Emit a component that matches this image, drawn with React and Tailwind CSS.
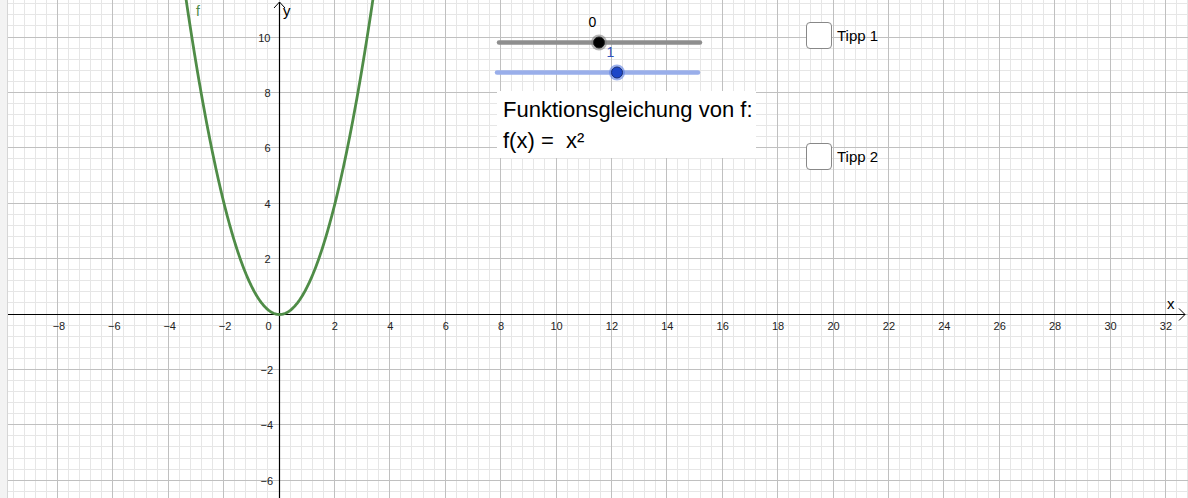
// App.jsx – GeoGebra-style graphics view with f(x) = x²

const W = 1188;
const H = 498;
const OX = 279;   // origin, px
const OY = 314;
const S = 27.7;   // px per unit
const MINOR = S * 0.4;
const LEFT = 8;   // grid starts after the side strip

const px = (v) => Math.floor(v) + 0.5;

const gridLines = () => {
  const minor = [];
  const major = [];
  const kx0 = Math.ceil((LEFT - OX) / MINOR);
  const kx1 = Math.floor((W - OX) / MINOR);
  for (let k = kx0; k <= kx1; k++) {
    const x = px(OX + k * MINOR);
    (k % 5 === 0 ? major : minor).push({ x1: x, y1: 0, x2: x, y2: H });
  }
  const ky0 = Math.ceil((0 - OY) / MINOR);
  const ky1 = Math.floor((H - OY) / MINOR);
  for (let k = ky0; k <= ky1; k++) {
    const y = px(OY + k * MINOR);
    (k % 5 === 0 ? major : minor).push({ x1: LEFT, y1: y, x2: W, y2: y });
  }
  return { minor, major };
};

const parabola = () => {
  const pts = [];
  for (let x = -3.45; x <= 3.4501; x += 0.02) {
    pts.push(`${(OX + 0.5 + x * S).toFixed(2)},${(OY + 0.5 - x * x * S).toFixed(2)}`);
  }
  return 'M' + pts.join(' L');
};

const X_TICKS = [-8, -6, -4, -2, 2, 4, 6, 8, 10, 12, 14, 16, 18, 20, 22, 24, 26, 28, 30, 32];
const Y_TICKS = [10, 8, 6, 4, 2, -2, -4, -6];
const num = (n) => (n < 0 ? '\u2212' + Math.abs(n) : String(n));

const Slider = ({ y, x1, x2, knob, track, fill, halo, ring }) => (
  <g>
    <line x1={x1} y1={y} x2={x2} y2={y} stroke={track} strokeWidth="4.5" strokeLinecap="round" />
    <circle cx={knob} cy={y} r="8" fill={halo} />
    <circle cx={knob} cy={y} r="5.5" fill={fill} stroke={ring} strokeWidth="1" />
  </g>
);

const Checkbox = ({ label, top }) => (
  <div className="absolute left-[806px] flex items-center gap-[5px]" style={{ top }}>
    <div className="w-[26px] h-[27px] rounded-[4px] border-[1.5px] border-[#888] bg-white" />
    <span className="text-[15px] leading-none text-black">{label}</span>
  </div>
);

export default function App() {
  const { minor, major } = gridLines();

  return (
    <div className="relative w-[1188px] h-[498px] overflow-hidden bg-white font-['Liberation_Sans',Arial,sans-serif]">
      <svg width={W} height={H} className="absolute inset-0">
        {/* side strip */}
        <rect x="0" y="0" width={LEFT - 1} height={H} fill="#f3f3f3" />
        <line x1={LEFT - 0.5} y1="0" x2={LEFT - 0.5} y2={H} stroke="#d6d6d6" />

        {/* grid */}
        {minor.map((l, i) => (
          <line key={'m' + i} {...l} stroke="#e6e6e6" strokeWidth="1" />
        ))}
        {major.map((l, i) => (
          <line key={'M' + i} {...l} stroke="#c0c0c0" strokeWidth="1" />
        ))}

        {/* axes */}
        <line x1={LEFT} y1={OY + 0.5} x2={1185} y2={OY + 0.5} stroke="#000" strokeWidth="1.2" />
        <line x1={OX + 0.5} y1="2" x2={OX + 0.5} y2={H} stroke="#000" strokeWidth="1.2" />
        <path d="M1179 308.5 L1185 314.5 L1179 320.5" fill="none" stroke="#000" strokeWidth="1" />
        <path d="M274 8 L279.5 2 L285 8" fill="none" stroke="#000" strokeWidth="1" />
        <text x="1167" y="309" className="fill-black text-[15px]">x</text>
        <text x="283" y="16" className="fill-black text-[15px]">y</text>

        {/* tick labels */}
        {X_TICKS.map((n) => (
          <text key={'x' + n} x={OX + n * S + (n < 0 ? 1.5 : 0.5)} y="330" textAnchor="middle" className="fill-[#222] text-[11px]">
            {num(n)}
          </text>
        ))}
        <text x="268.5" y="330" textAnchor="middle" className="fill-[#222] text-[11px]">0</text>
        {Y_TICKS.map((n) => (
          <text key={'y' + n} x={n < 0 ? 273 : 270.5} y={OY - n * S + 4.5} textAnchor="end" className="fill-[#222] text-[11px]">
            {num(n)}
          </text>
        ))}

        {/* function graph */}
        <path d={parabola()} fill="none" stroke="#4f8c47" strokeWidth="2.8" strokeLinejoin="round" />
        <text x="196" y="16" className="fill-[#4f8c47] text-[14px]">f</text>

        {/* sliders */}
        <Slider y={42.5} x1={499} x2={700} knob={599} track="#8e8e8e" fill="#000" halo="rgba(120,120,120,0.55)" ring="#222" />
        <text x="592.5" y="27" textAnchor="middle" className="fill-black text-[14px]">0</text>
        <Slider y={72.5} x1={497} x2={698} knob={617} track="#99aeea" fill="#1d47c8" halo="rgba(90,125,225,0.6)" ring="#1a2f77" />
        <text x="610.5" y="57" textAnchor="middle" className="fill-[#2f52c0] text-[14px]">1</text>
      </svg>

      {/* equation text box */}
      <div className="absolute left-[497px] top-[91px] w-[259px] h-[67px] bg-white pl-[6px] pt-[3px] text-[22px] leading-[31px] text-black">
        <div>Funktionsgleichung von f:</div>
        <div className="whitespace-pre">f(x) =  x²</div>
      </div>

      {/* checkboxes */}
      <Checkbox label="Tipp 1" top={22} />
      <Checkbox label="Tipp 2" top={143} />
    </div>
  );
}
